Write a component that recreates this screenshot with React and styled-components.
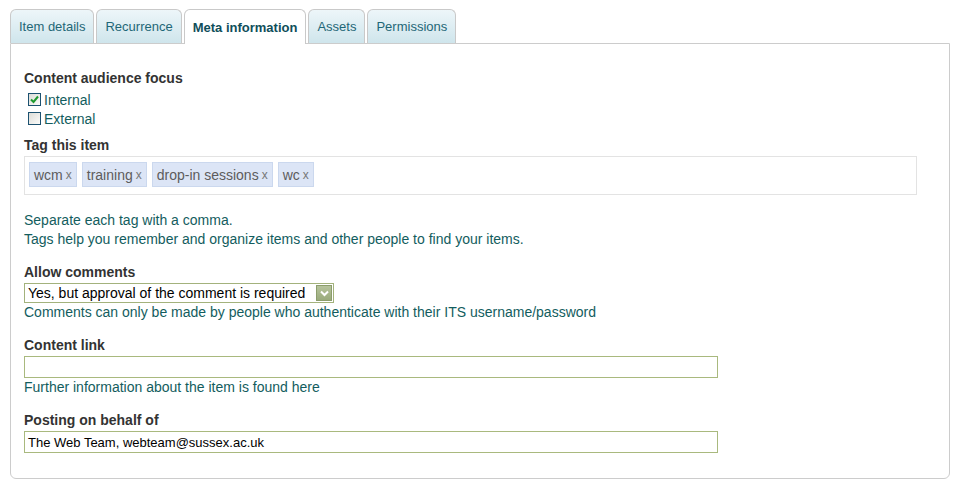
import React from "react";
import styled, { createGlobalStyle } from "styled-components";

const Global = createGlobalStyle`
  html, body { margin: 0; padding: 0; background: #fff; }
  body { font-family: "Liberation Sans", Arial, sans-serif; }
`;

const Page = styled.div`
  padding: 9px 8px 0 10px;
  width: 940px;
`;

const TabBar = styled.div`
  display: flex;
  gap: 2px;
  height: 34px;
  align-items: stretch;
`;

const Tab = styled.div`
  box-sizing: border-box;
  display: flex;
  align-items: center;
  justify-content: center;
  padding: 0 8px;
  font-size: 13px;
  border: 1px solid #c9c9c9;
  border-bottom: none;
  border-radius: 6px 6px 0 0;
  color: ${(p) => (p.$active ? "#0f4e5a" : "#1f6777")};
  font-weight: ${(p) => (p.$active ? "bold" : "normal")};
  background: ${(p) =>
    p.$active ? "#fff" : "linear-gradient(#edf6f9, #cfe5ec)"};
  height: ${(p) => (p.$active ? "35px" : "34px")};
  position: relative;
  z-index: ${(p) => (p.$active ? 1 : 0)};
`;

const Panel = styled.div`
  box-sizing: border-box;
  border: 1px solid #cccccc;
  border-radius: 0 0 6px 6px;
  padding: 25px 13px 25px 13px;
  width: 940px;
`;

const Label = styled.div`
  font-size: 14px;
  font-weight: bold;
  color: #333;
  line-height: 18px;
  margin-top: ${(p) => p.$mt || 0}px;
  margin-bottom: ${(p) => p.$mb ?? 2}px;
`;

const CheckRow = styled.label`
  display: flex;
  align-items: center;
  height: 19px;
  padding-left: 4px;
  font-size: 14px;
  color: #135d5e;
`;

const Box = styled.span`
  box-sizing: border-box;
  width: 13px;
  height: 13px;
  border: 1px solid #1c5170;
  background: linear-gradient(135deg, #dcdcd7, #fbfbf9);
  margin-right: 3px;
  display: inline-flex;
  align-items: center;
  justify-content: center;
`;

const TagBox = styled.div`
  box-sizing: border-box;
  width: 893px;
  height: 39px;
  border: 1px solid #e3e3e3;
  padding: 5px 4px;
  display: flex;
  gap: 5px;
`;

const Tag = styled.span`
  box-sizing: border-box;
  height: 25px;
  display: inline-flex;
  align-items: center;
  padding: 0 4px;
  background: #dce5f6;
  border: 1px solid #cbd8ee;
  font-size: 14px;
  color: #5c5c5c;
`;

const TagX = styled.span`
  font-size: 12px;
  color: #777;
  margin-left: 3px;
`;

const Hint = styled.div`
  font-size: 14px;
  line-height: 19px;
  color: #135d5e;
  margin-top: ${(p) => p.$mt || 0}px;
`;

const SelectBox = styled.div`
  box-sizing: border-box;
  width: 310px;
  height: 20px;
  border: 1px solid #a3b27c;
  display: flex;
  align-items: center;
  justify-content: space-between;
  padding: 0 1px 0 3px;
  font-size: 14px;
  color: #000;
`;

const Arrow = styled.span`
  box-sizing: border-box;
  width: 16px;
  height: 16px;
  background: linear-gradient(#b6c39c, #9aab7c);
  border: 1px solid #8c9d6c;
  display: inline-flex;
  align-items: center;
  justify-content: center;
`;

const TextInput = styled.div`
  box-sizing: border-box;
  width: 694px;
  height: 22px;
  border: 1px solid #a9b97e;
  display: flex;
  align-items: center;
  padding: 0 3px;
  font-size: 13px;
  color: #000;
`;

const tabs = ["Item details", "Recurrence", "Meta information", "Assets", "Permissions"];
const tags = ["wcm", "training", "drop-in sessions", "wc"];

export default function App() {
  return (
    <Page>
      <Global />
      <TabBar>
        {tabs.map((t) => (
          <Tab key={t} $active={t === "Meta information"}>
            {t}
          </Tab>
        ))}
      </TabBar>
      <Panel>
        <Label $mb={3}>Content audience focus</Label>
        <CheckRow>
          <Box>
            <svg width="9" height="9" viewBox="0 0 9 9">
              <path d="M1 4.5 L3.5 7 L8 1.5" stroke="#1f9a2f" strokeWidth="2" fill="none" />
            </svg>
          </Box>
          Internal
        </CheckRow>
        <CheckRow>
          <Box />
          External
        </CheckRow>
        <Label $mt={8}>Tag this item</Label>
        <TagBox>
          {tags.map((t) => (
            <Tag key={t}>
              {t}
              <TagX>x</TagX>
            </Tag>
          ))}
        </TagBox>
        <Hint $mt={16}>Separate each tag with a comma.</Hint>
        <Hint>Tags help you remember and organize items and other people to find your items.</Hint>
        <Label $mt={14}>Allow comments</Label>
        <SelectBox>
          <span>Yes, but approval of the comment is required</span>
          <Arrow>
            <svg width="9" height="7" viewBox="0 0 9 7">
              <path d="M1 1.5 L4.5 5 L8 1.5" stroke="#fff" strokeWidth="2" fill="none" />
            </svg>
          </Arrow>
        </SelectBox>
        <Hint>Comments can only be made by people who authenticate with their ITS username/password</Hint>
        <Label $mt={14}>Content link</Label>
        <TextInput />
        <Hint>Further information about the item is found here</Hint>
        <Label $mt={14}>Posting on behalf of</Label>
        <TextInput>The Web Team, webteam@sussex.ac.uk</TextInput>
      </Panel>
    </Page>
  );
}
